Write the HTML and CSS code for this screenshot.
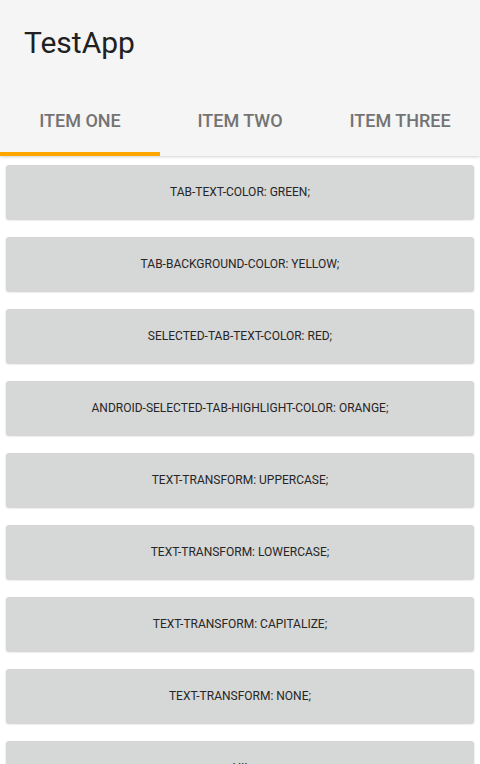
FILE: index.html
```html
<!DOCTYPE html>
<html>
<head>
<meta charset="utf-8">
<link rel="stylesheet" href="styles.css">
</head>
<body>
<div class="app">
  <header class="appbar">
    <div class="toolbar"><span class="title">TestApp</span></div>
    <nav class="tabs">
      <div class="tab selected">ITEM ONE</div>
      <div class="tab">ITEM TWO</div>
      <div class="tab">ITEM THREE</div>
    </nav>
  </header>
  <main class="list">
    <div class="item"><div class="btn">TAB-TEXT-COLOR: GREEN;</div></div>
    <div class="item"><div class="btn">TAB-BACKGROUND-COLOR: YELLOW;</div></div>
    <div class="item"><div class="btn">SELECTED-TAB-TEXT-COLOR: RED;</div></div>
    <div class="item"><div class="btn">ANDROID-SELECTED-TAB-HIGHLIGHT-COLOR: ORANGE;</div></div>
    <div class="item"><div class="btn">TEXT-TRANSFORM: UPPERCASE;</div></div>
    <div class="item"><div class="btn">TEXT-TRANSFORM: LOWERCASE;</div></div>
    <div class="item"><div class="btn">TEXT-TRANSFORM: CAPITALIZE;</div></div>
    <div class="item"><div class="btn">TEXT-TRANSFORM: NONE;</div></div>
    <div class="item"><div class="btn">HII</div></div>
  </main>
</div>
</body>
</html>
```

FILE: styles.css
```css
html, body {
  margin: 0;
  padding: 0;
  background: #ffffff;
}
body {
  font-family: Roboto, "Noto Sans", "Liberation Sans", sans-serif;
  width: 480px;
  height: 764px;
  overflow: hidden;
}
.app {
  display: flex;
  flex-direction: column;
}
.appbar {
  background: #f5f5f5;
  box-shadow: 0 1px 3px rgba(0,0,0,0.18);
  position: relative;
  z-index: 1;
}
.toolbar {
  height: 84px;
  display: flex;
  align-items: center;
  padding-left: 24px;
}
.title {
  font-size: 30px;
  color: #212121;
  font-weight: 400;
}
.tabs {
  display: flex;
  height: 72px;
}
.tab {
  flex: 1;
  display: flex;
  align-items: center;
  justify-content: center;
  font-size: 18px;
  font-weight: 500;
  color: #737373;
  box-sizing: border-box;
  border-bottom: 4px solid transparent;
  padding-top: 4px;
}
.tab.selected {
  border-bottom-color: #ffa500;
}
.list {
  display: flex;
  flex-direction: column;
}
.item {
  height: 72px;
  box-sizing: border-box;
  padding: 9px 6px;
}
.btn {
  height: 100%;
  background: #d6d7d7;
  border-radius: 3px;
  box-shadow: 0 1px 2px rgba(0,0,0,0.22);
  display: flex;
  align-items: center;
  justify-content: center;
  font-size: 12px;
  color: #262626;
}
```
